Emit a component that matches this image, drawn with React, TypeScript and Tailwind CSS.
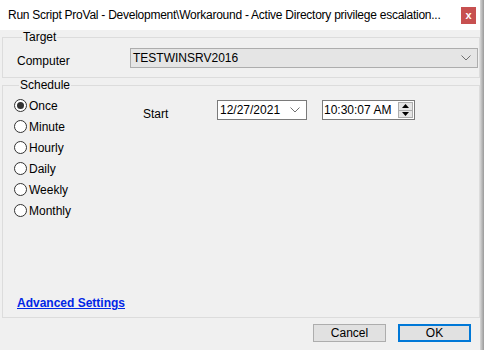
import React from 'react';

function Radio({ label, checked }: { label: string; checked?: boolean }) {
  return (
    <label className="flex h-[21px] items-center gap-[2px]">
      <span className="flex size-[13px] items-center justify-center rounded-full border border-[#333333] bg-white">
        {checked && <span className="size-[7px] rounded-full bg-[#333333]" />}
      </span>
      <span>{label}</span>
    </label>
  );
}

function Chevron() {
  return (
    <svg width="10" height="6" viewBox="0 0 10 6" className="text-[#707070]">
      <polyline points="0.5,0.5 5,5 9.5,0.5" fill="none" stroke="currentColor" strokeWidth="1" />
    </svg>
  );
}

export default function App() {
  return (
    <div className="flex h-[350px] w-[484px] bg-[#f0f0f0] font-['Segoe_UI','Liberation_Sans',sans-serif] text-[12px] leading-[16px] text-black">
      <div className="flex w-[480px] flex-col">
        <div className="flex h-[30px] items-center bg-white pl-[8px] pr-[4px]">
          <span className="truncate tracking-[-0.25px]">
            Run Script ProVal - Development\Workaround - Active Directory privilege escalation...
          </span>
          <button className="ml-auto flex h-[17px] w-[15px] shrink-0 items-center justify-center bg-[#c75050] text-[11px] font-bold text-white">
            x
          </button>
        </div>

        <fieldset className="ml-[2px] border border-[#dcdcdc] pb-[8px] pl-[14px] pr-px">
          <legend className="ml-[5px] px-px leading-[14px]">Target</legend>
          <div className="mt-[3px] flex items-center">
            <span className="w-[113px] pt-[6px]">Computer</span>
            <div className="flex h-[20px] flex-1 items-center border border-[#adadad] bg-[#e5e5e5] pl-[2px] pr-[6px]">
              <span>TESTWINSRV2016</span>
              <span className="ml-auto">
                <Chevron />
              </span>
            </div>
          </div>
        </fieldset>

        <fieldset className="ml-[2px] border border-[#dcdcdc] pb-[6px] pl-[11px]">
          <legend className="ml-[5px] px-px leading-[14px]">Schedule</legend>
          <div className="mt-[3px] flex">
            <div className="flex w-[129px] flex-col">
              <Radio label="Once" checked />
              <Radio label="Minute" />
              <Radio label="Hourly" />
              <Radio label="Daily" />
              <Radio label="Weekly" />
              <Radio label="Monthly" />
            </div>
            <div className="mt-[5px] flex items-start">
              <span className="w-[74px] pt-[6px]">Start</span>
              <div className="flex h-[20px] w-[90px] items-center border border-[#7a7a7a] bg-white pl-[2px] pr-[6px]">
                <span>12/27/2021</span>
                <span className="ml-auto">
                  <Chevron />
                </span>
              </div>
              <div className="ml-[15px] flex h-[20px] w-[93px] items-center border border-[#7a7a7a] bg-white pl-[1px] pr-px">
                <span>10:30:07 AM</span>
                <div className="ml-auto flex h-[16px] w-[15px] flex-col border border-[#adadad] bg-[#e5e5e5]">
                  <div className="flex flex-1 items-center justify-center border-b border-[#adadad]">
                    <svg width="7" height="4" viewBox="0 0 7 4">
                      <polygon points="0,4 3.5,0 7,4" fill="#000" />
                    </svg>
                  </div>
                  <div className="flex flex-1 items-center justify-center">
                    <svg width="7" height="4" viewBox="0 0 7 4">
                      <polygon points="0,0 3.5,4 7,0" fill="#000" />
                    </svg>
                  </div>
                </div>
              </div>
            </div>
          </div>
          <a className="ml-[3px] mt-[74px] block w-fit font-bold text-[#0026e6] underline">
            Advanced Settings
          </a>
        </fieldset>

        <div className="mt-[6px] flex justify-end gap-[12px] pr-[9px]">
          <button className="h-[18px] w-[73px] border border-[#adadad] bg-[#e1e1e1] leading-[16px]">Cancel</button>
          <button className="h-[18px] w-[73px] border-2 border-[#0078d7] bg-[#e1e1e1] leading-[14px]">OK</button>
        </div>
      </div>
      <div className="w-[4px] bg-gradient-to-r from-[#d8d8d8] to-[#9a9a9a]" />
    </div>
  );
}
